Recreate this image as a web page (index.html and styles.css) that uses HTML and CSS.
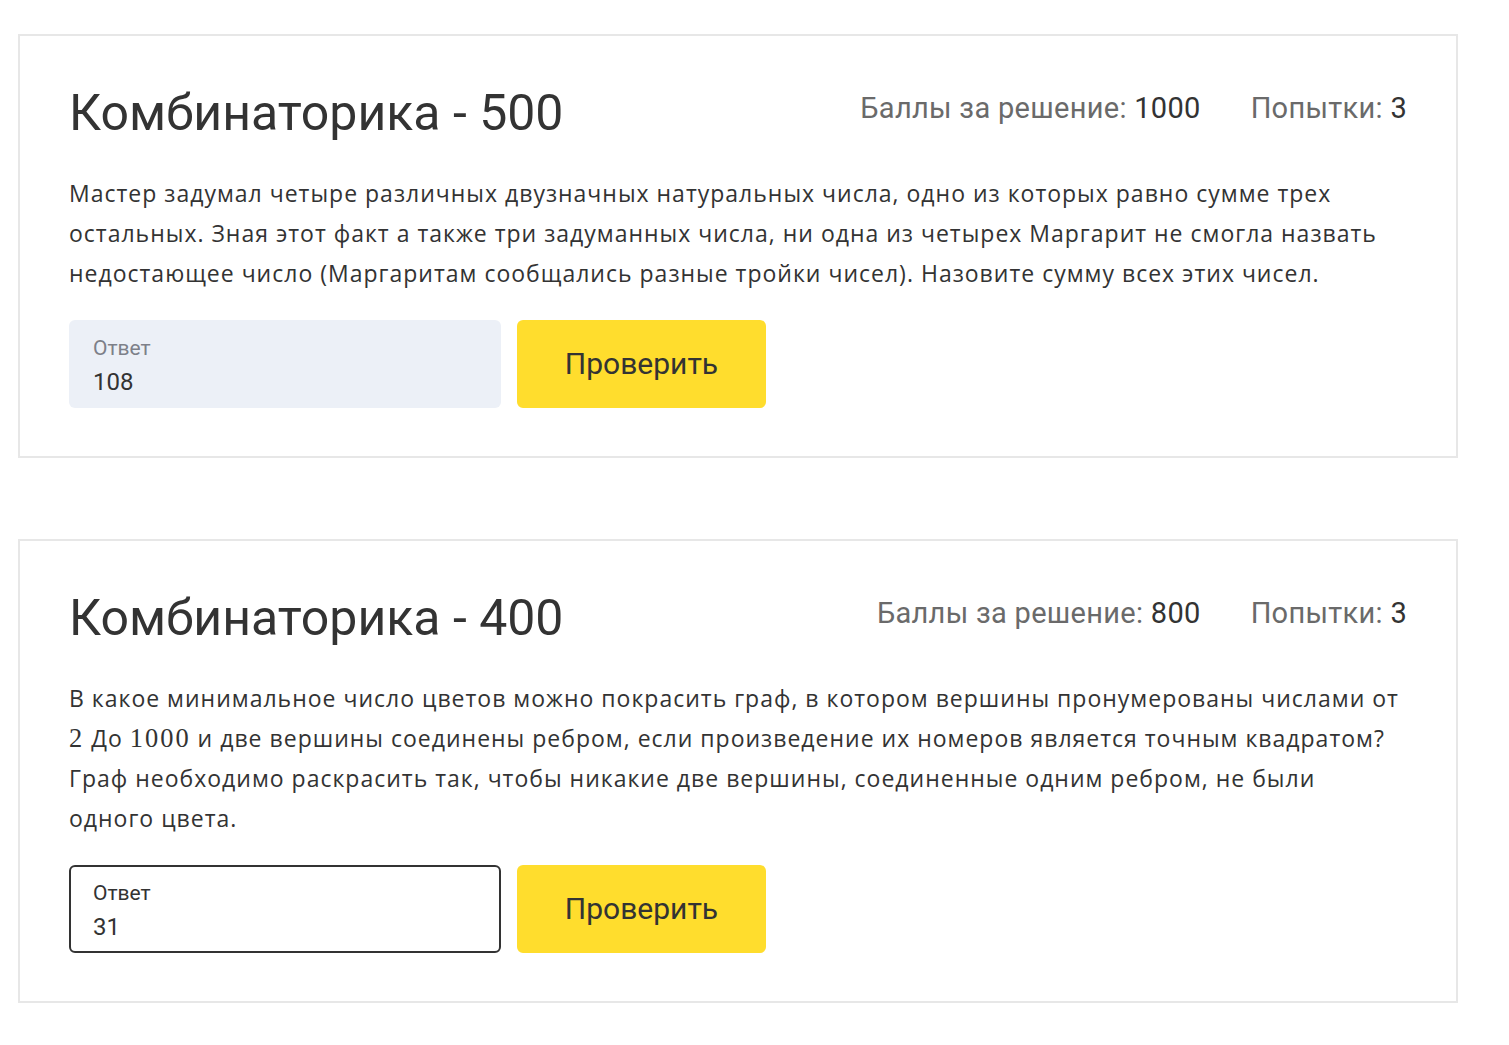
FILE: index.html
```html
<!DOCTYPE html>
<html lang="ru">
<head>
<meta charset="utf-8">
<title>Задачи</title>
<link rel="stylesheet" href="styles.css">
</head>
<body>
<main class="list">
  <section class="task">
    <header class="task-head">
      <h2 class="task-title">Комбинаторика - 500</h2>
      <div class="task-meta">
        <span class="meta-item">Баллы за решение: <b>1000</b></span>
        <span class="meta-item">Попытки: <b>3</b></span>
      </div>
    </header>
    <p class="task-text">Мастер задумал четыре различных двузначных натуральных числа, одно из которых равно сумме трех остальных. Зная этот факт а также три задуманных числа, ни одна из четырех Маргарит не смогла назвать недостающее число (Маргаритам сообщались разные тройки чисел). Назовите сумму всех этих чисел.</p>
    <form class="answer">
      <label class="field field-filled">
        <span class="field-label">Ответ</span>
        <span class="field-value">108</span>
      </label>
      <button type="button" class="check">Проверить</button>
    </form>
  </section>

  <section class="task">
    <header class="task-head">
      <h2 class="task-title">Комбинаторика - 400</h2>
      <div class="task-meta">
        <span class="meta-item">Баллы за решение: <b>800</b></span>
        <span class="meta-item">Попытки: <b>3</b></span>
      </div>
    </header>
    <p class="task-text">В какое минимальное число цветов можно покрасить граф, в котором вершины пронумерованы числами от <span class="math">2</span>&nbsp;До <span class="math">1000</span> и две вершины соединены ребром, если произведение их номеров является точным квадратом? Граф необходимо раскрасить так, чтобы никакие две вершины, соединенные одним ребром, не были одного цвета.</p>
    <form class="answer">
      <label class="field field-focus">
        <span class="field-label">Ответ</span>
        <span class="field-value">31</span>
      </label>
      <button type="button" class="check">Проверить</button>
    </form>
  </section>
</main>
</body>
</html>
```

FILE: styles.css
```css
* { box-sizing: border-box; }

body {
  margin: 0;
  background: #fff;
  color: #333;
  font-family: "Open Sans", "Noto Sans", sans-serif;
}

.list {
  width: 1440px;
  margin: 34px 0 0 18px;
  display: flex;
  flex-direction: column;
  gap: 81px;
}

.task {
  border: 2px solid #e7e7e7;
  padding: 47px 49px 48px 49px;
}

.task-head {
  display: flex;
  justify-content: space-between;
  align-items: flex-start;
}

.task-title {
  margin: 0;
  font-family: "Roboto", sans-serif;
  font-weight: 400;
  font-size: 50px;
  line-height: 60px;
  color: #333;
}

.task-meta {
  display: flex;
  gap: 50px;
  padding-top: 8px;
  font-family: "Roboto", sans-serif;
  font-size: 29px;
  line-height: 34px;
  letter-spacing: 0.3px;
  color: #6a6a6a;
}

.meta-item b {
  font-weight: 400;
  color: #333;
}

.task-text {
  margin: 30px 0 27px;
  font-size: 23px;
  line-height: 40px;
  letter-spacing: 1px;
  color: #333;
}

.math {
  font-family: "Liberation Serif", "DejaVu Serif", serif;
  font-size: 1.15em;
  letter-spacing: 2px;
}

.answer {
  display: flex;
  gap: 16px;
}

.field {
  width: 432px;
  height: 88px;
  border-radius: 6px;
  padding: 14px 24px;
  display: flex;
  flex-direction: column;
  font-family: "Roboto", sans-serif;
}

.field-filled {
  background: #ecf0f7;
}

.field-focus {
  background: #fff;
  border: 2px solid #333;
  padding: 12px 22px;
}

.field-label {
  font-size: 21px;
  line-height: 28px;
  color: #7d8089;
}

.field-focus .field-label {
  color: #333;
}

.field-value {
  font-size: 24px;
  line-height: 40px;
  color: #333;
}

.check {
  width: 249px;
  height: 88px;
  border: 0;
  border-radius: 6px;
  background: #ffdd2d;
  color: #333;
  font-family: "Roboto", sans-serif;
  font-size: 30px;
  padding: 0 0 2px;
  cursor: pointer;
}
```
